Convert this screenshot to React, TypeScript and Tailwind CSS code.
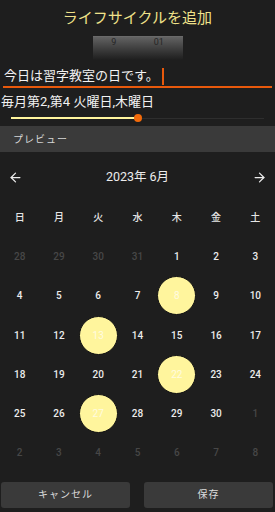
import React from "react";
import { ArrowLeft, ArrowRight } from "lucide-react";

interface Day {
  n: number;
  inMonth: boolean;
}

const weekdays = ["日", "月", "火", "水", "木", "金", "土"];
const marked = [8, 13, 22, 27];

const buildDays = (): Day[] => {
  const days: Day[] = [];
  [28, 29, 30, 31].forEach((n) => days.push({ n, inMonth: false }));
  for (let i = 1; i <= 30; i++) days.push({ n: i, inMonth: true });
  for (let i = 1; i <= 8; i++) days.push({ n: i, inMonth: false });
  return days;
};

const App: React.FC = () => {
  const days = buildDays();

  return (
    <div
      className="w-[275px] h-[512px] bg-[#1e1e1e] text-[#e6e6e6] flex flex-col overflow-hidden"
      style={{ fontFamily: "Roboto, 'Noto Sans CJK JP', sans-serif" }}
    >
      <div className="h-[36px] flex items-center justify-center text-[15px] text-[#f0e28a]">ライフサイクルを追加</div>

      {/* time picker strip */}
      <div className="h-[24px] w-[90px] mx-auto bg-gradient-to-b from-[#636363] to-[#1e1e1e] border-t border-[#6a6a6a] flex justify-around text-[9px] leading-none pt-[1px] text-[#262626]">
        <span>9</span>
        <span>01</span>
      </div>

      <div className="h-[28px] mx-[3px] border-b-2 border-[#e8590c] flex items-center pl-[1px] pt-[6px]">
        <span className="text-[13px] text-[#f2f2f2]">今日は習字教室の日です。</span>
        <span className="ml-[3px] w-[2px] h-[17px] bg-[#e8590c]"></span>
      </div>

      <div className="mt-[6px] pl-[1px] text-[13px] leading-[16px] text-[#f2f2f2]">毎月第2,第4 火曜日,木曜日</div>

      <div className="h-[16px] mx-[11px] flex items-center">
        <div className="relative w-full h-[8px] flex items-center">
          <div className="w-full h-[1px] bg-[#2e2e2e]"></div>
          <div className="absolute left-0 w-[127px] h-[2px] bg-[#fff59d]"></div>
          <div className="absolute left-[123px] w-[8px] h-[8px] rounded-full bg-[#f26a0a]"></div>
        </div>
      </div>

      <div className="h-[26px] bg-[#3a3a3a] flex items-center pl-[13px] text-[10px] text-[#d6d6d6] tracking-[1px]">プレビュー</div>

      <div className="h-[45.5px] flex items-center justify-between px-[8px] pt-[6px]">
        <ArrowLeft size={15} strokeWidth={2} color="#ececec" />
        <span className="text-[12.5px] text-[#ececec]">2023年 6月</span>
        <ArrowRight size={15} strokeWidth={2} color="#ececec" />
      </div>

      <div className="grid grid-cols-7">
        {weekdays.map((w) => (
          <div key={w} className="h-[39.3px] flex items-center justify-center text-[10px] font-medium text-[#e6e6e6]">
            {w}
          </div>
        ))}
        {days.map((d, i) => {
          const hit = d.inMonth && marked.includes(d.n);
          return (
            <div key={i} className="h-[39.3px] flex items-center justify-center">
              {hit ? (
                <div className="w-[39px] h-[39px] rounded-full bg-[#fff59d] border border-[#111] flex items-center justify-center text-[10px] text-[#fffbe0]">
                  {d.n}
                </div>
              ) : (
                <span className={`text-[10px] font-medium ${d.inMonth ? "text-[#ececec]" : "text-[#474747]"}`}>{d.n}</span>
              )}
            </div>
          );
        })}
      </div>

      <div className="mt-[9px] flex gap-[14px] pl-[1px] pr-[2px]">
        <button className="flex-1 h-[26px] rounded-[3px] bg-[#3a3a3a] text-[10px] text-[#dcdcdc] tracking-[1px]">キャンセル</button>
        <button className="flex-1 h-[26px] rounded-[3px] bg-[#3a3a3a] text-[10px] text-[#dcdcdc] tracking-[1px]">保存</button>
      </div>
    </div>
  );
};

export default App;
